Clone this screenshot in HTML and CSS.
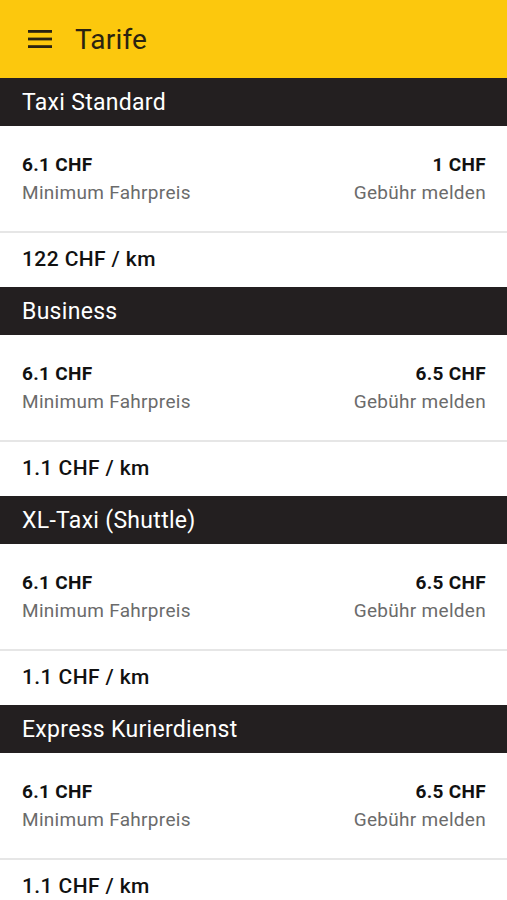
FILE: index.html
```html
<!DOCTYPE html>
<html lang="de">
<head>
    <meta charset="UTF-8" />
    <title>Tarife</title>
    <link rel="stylesheet" href="styles.css">
</head>
<body>
<header class="topbar">
    <svg class="menu-icon" width="24" height="18" viewBox="0 0 24 18">
        <rect x="0" y="0" width="24" height="2.8" fill="#2a2311" />
        <rect x="0" y="7.6" width="24" height="2.8" fill="#2a2311" />
        <rect x="0" y="15.2" width="24" height="2.8" fill="#2a2311" />
    </svg>
    <h1>Tarife</h1>
</header>

<section class="tariff">
    <h2>Taxi Standard</h2>
    <div class="prices">
        <div class="price">
            <strong>6.1 CHF</strong>
            <span>Minimum Fahrpreis</span>
        </div>
        <div class="price right">
            <strong>1 CHF</strong>
            <span>Gebühr melden</span>
        </div>
    </div>
    <div class="per-km">122 CHF / km</div>
</section>

<section class="tariff">
    <h2>Business</h2>
    <div class="prices">
        <div class="price">
            <strong>6.1 CHF</strong>
            <span>Minimum Fahrpreis</span>
        </div>
        <div class="price right">
            <strong>6.5 CHF</strong>
            <span>Gebühr melden</span>
        </div>
    </div>
    <div class="per-km">1.1 CHF / km</div>
</section>

<section class="tariff">
    <h2>XL-Taxi (Shuttle)</h2>
    <div class="prices">
        <div class="price">
            <strong>6.1 CHF</strong>
            <span>Minimum Fahrpreis</span>
        </div>
        <div class="price right">
            <strong>6.5 CHF</strong>
            <span>Gebühr melden</span>
        </div>
    </div>
    <div class="per-km">1.1 CHF / km</div>
</section>

<section class="tariff">
    <h2>Express Kurierdienst</h2>
    <div class="prices">
        <div class="price">
            <strong>6.1 CHF</strong>
            <span>Minimum Fahrpreis</span>
        </div>
        <div class="price right">
            <strong>6.5 CHF</strong>
            <span>Gebühr melden</span>
        </div>
    </div>
    <div class="per-km">1.1 CHF / km</div>
</section>
</body>
</html>
```

FILE: styles.css
```css
:root {
    --yellow: #fcc80d;
    --dark: #231f20;
    --grey-text: #6b6b6b;
    --divider: #e6e6e6;
}

body {
    margin: 0;
    font-family: Roboto, "Noto Sans", Arial, sans-serif;
    background-color: white;
    color: #1a1a1a;
    overflow: hidden;
}

.topbar {
    height: 78px;
    background-color: var(--yellow);
    display: flex;
    align-items: center;
    padding-left: 28px;
}

.menu-icon {
    display: block;
}

.topbar h1 {
    margin: 0 0 0 23px;
    font-size: 28px;
    font-weight: 400;
    color: #2a2311;
    letter-spacing: 0.2px;
}

.tariff h2 {
    margin: 0;
    height: 48px;
    padding-top: 2px;
    box-sizing: border-box;
    line-height: 46px;
    padding-left: 22px;
    background-color: var(--dark);
    color: white;
    font-size: 23px;
    font-weight: 400;
    letter-spacing: 0.3px;
}

.prices {
    display: flex;
    justify-content: space-between;
    padding: 25px 21px 24px 22px;
    border-bottom: 2px solid var(--divider);
}

.price {
    display: flex;
    flex-direction: column;
}

.price.right {
    align-items: flex-end;
}

.price strong {
    font-size: 19px;
    font-weight: 700;
    line-height: 28px;
    letter-spacing: 0.3px;
    color: #111;
}

.price span {
    font-size: 19px;
    line-height: 28px;
    letter-spacing: 0.3px;
    color: var(--grey-text);
}

.per-km {
    height: 54px;
    line-height: 52px;
    padding-left: 22px;
    font-size: 21px;
    font-weight: 500;
    letter-spacing: 0.4px;
    color: #111;
}
```
